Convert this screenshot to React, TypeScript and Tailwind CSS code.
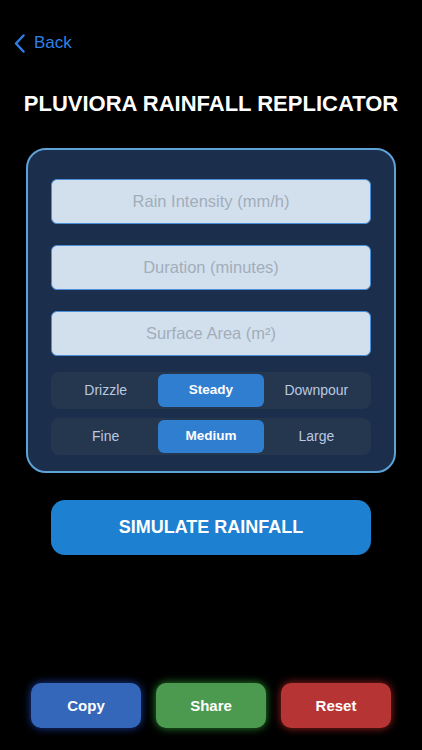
import React, { useState } from 'react';

const font = { fontFamily: '"Liberation Sans", Arial, sans-serif' };

const Segmented: React.FC<{ options: string[]; value: string; onChange: (v: string) => void }> = ({ options, value, onChange }) => (
  <div className="grid grid-cols-3 rounded-[8px] bg-[#25364f] p-[2px] h-[37px]">
    {options.map(opt => {
      const active = opt === value;
      return (
        <button
          key={opt}
          onClick={() => onChange(opt)}
          className={
            active
              ? 'rounded-[6px] bg-[#2f7ed0] text-white font-bold text-[13.5px]'
              : 'rounded-[6px] text-[#b9c9e0] text-[14px]'
          }
        >
          {opt}
        </button>
      );
    })}
  </div>
);

const Field: React.FC<{ placeholder: string }> = ({ placeholder }) => (
  <input
    placeholder={placeholder}
    className="h-[45px] w-full rounded-[6px] border-[1.5px] border-[#4a8fd8] bg-[#d2e0ee] text-center text-[16.5px] text-[#3a4658] placeholder:text-[#a2adba] outline-none"
  />
);

const App: React.FC = () => {
  const [intensity, setIntensity] = useState('Steady');
  const [size, setSize] = useState('Medium');

  return (
    <div className="flex h-[750px] w-full flex-col bg-black" style={font}>
      <div className="flex items-center gap-[9px] pl-[14px] pt-[33px] text-[#2f80e6]">
        <svg width="11" height="19" viewBox="0 0 11 19" fill="none">
          <path d="M9.5 1.5L2 9.5L9.5 17.5" stroke="#2f80e6" strokeWidth="2.4" strokeLinecap="round" strokeLinejoin="round" />
        </svg>
        <span className="text-[17px] leading-[20px]">Back</span>
      </div>

      <h1 className="mt-[38px] text-center text-[22px] font-bold leading-[26px] text-white">
        PLUVIORA RAINFALL REPLICATOR
      </h1>

      <div className="mx-[26px] mt-[31px] flex flex-col rounded-[20px] border-2 border-[#5ea3d8] bg-[#1b2e4b] px-[23px] pb-[16px] pt-[29px]">
        <div className="flex flex-col gap-[21px]">
          <Field placeholder="Rain Intensity (mm/h)" />
          <Field placeholder="Duration (minutes)" />
          <Field placeholder="Surface Area (m²)" />
        </div>
        <div className="mt-[16px] flex flex-col gap-[9px]">
          <Segmented options={['Drizzle', 'Steady', 'Downpour']} value={intensity} onChange={setIntensity} />
          <Segmented options={['Fine', 'Medium', 'Large']} value={size} onChange={setSize} />
        </div>
      </div>

      <button className="mx-[51px] mt-[27px] h-[55px] rounded-[14px] bg-[#1e80d0] text-[18px] font-bold text-white">
        SIMULATE RAINFALL
      </button>

      <div className="mt-auto mb-[22px] flex justify-center gap-[15px]">
        <button className="h-[45px] w-[110px] rounded-[10px] bg-[#3467b9] pt-[2px] text-[15px] font-bold text-white shadow-[0_0_8px_rgba(40,90,230,0.7)]">
          Copy
        </button>
        <button className="h-[45px] w-[110px] rounded-[10px] bg-[#4b9a4f] pt-[2px] text-[15px] font-bold text-white shadow-[0_0_8px_rgba(60,200,70,0.7)]">
          Share
        </button>
        <button className="h-[45px] w-[110px] rounded-[10px] bg-[#b73434] pt-[2px] text-[15px] font-bold text-white shadow-[0_0_8px_rgba(230,50,50,0.7)]">
          Reset
        </button>
      </div>
    </div>
  );
};

export default App;
